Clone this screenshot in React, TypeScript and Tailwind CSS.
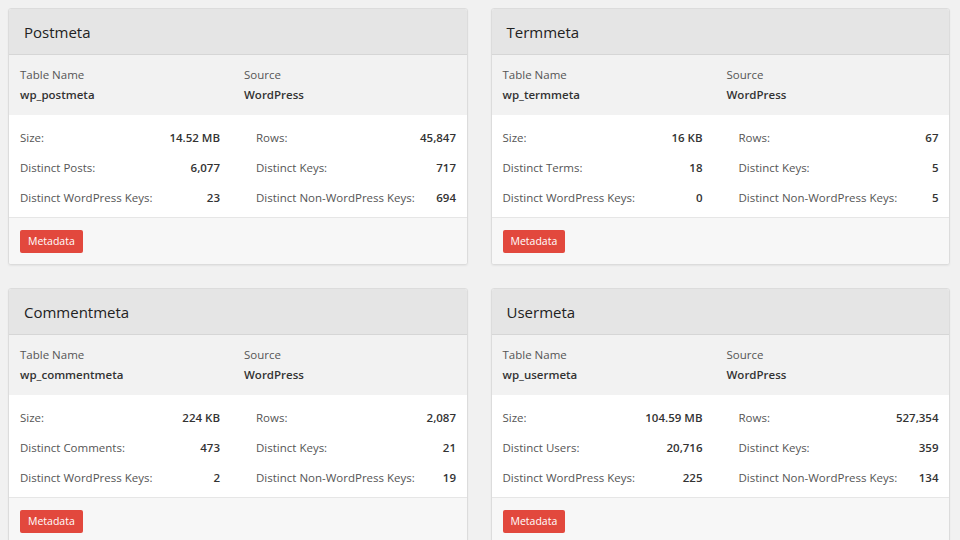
import * as React from 'react';

interface Stat {
  label: string,
  value: string
}

interface MetaCardProps {
  title: string,
  table: string,
  source: string,
  left: Stat[],
  right: Stat[]
}

const cards: MetaCardProps[] = [
  {
    title: "Postmeta", table: "wp_postmeta", source: "WordPress",
    left: [{ label: "Size:", value: "14.52 MB" }, { label: "Distinct Posts:", value: "6,077" }, { label: "Distinct WordPress Keys:", value: "23" }],
    right: [{ label: "Rows:", value: "45,847" }, { label: "Distinct Keys:", value: "717" }, { label: "Distinct Non-WordPress Keys:", value: "694" }],
  },
  {
    title: "Termmeta", table: "wp_termmeta", source: "WordPress",
    left: [{ label: "Size:", value: "16 KB" }, { label: "Distinct Terms:", value: "18" }, { label: "Distinct WordPress Keys:", value: "0" }],
    right: [{ label: "Rows:", value: "67" }, { label: "Distinct Keys:", value: "5" }, { label: "Distinct Non-WordPress Keys:", value: "5" }],
  },
  {
    title: "Commentmeta", table: "wp_commentmeta", source: "WordPress",
    left: [{ label: "Size:", value: "224 KB" }, { label: "Distinct Comments:", value: "473" }, { label: "Distinct WordPress Keys:", value: "2" }],
    right: [{ label: "Rows:", value: "2,087" }, { label: "Distinct Keys:", value: "21" }, { label: "Distinct Non-WordPress Keys:", value: "19" }],
  },
  {
    title: "Usermeta", table: "wp_usermeta", source: "WordPress",
    left: [{ label: "Size:", value: "104.59 MB" }, { label: "Distinct Users:", value: "20,716" }, { label: "Distinct WordPress Keys:", value: "225" }],
    right: [{ label: "Rows:", value: "527,354" }, { label: "Distinct Keys:", value: "359" }, { label: "Distinct Non-WordPress Keys:", value: "134" }],
  },
];

function StatColumn(props: { items: Stat[] }) {
  return (
    <div className="flex flex-col">
      {props.items.map((s) => (
        <div key={s.label} className="flex h-[30px] items-center justify-between">
          <span className="text-[#555]">{s.label}</span>
          <span className="font-semibold text-[#333]">{s.value}</span>
        </div>
      ))}
    </div>
  );
}

function MetaCard(props: MetaCardProps) {
  return (
    <div className="flex h-[257px] flex-col overflow-hidden rounded-[3px] border border-[#dcdcdc] bg-white shadow-[0_1px_2px_rgba(0,0,0,0.06)]">
      <div className="flex h-[46px] items-center border-b border-[#d6d6d6] bg-[#e5e5e5] px-[15px]">
        <h2 className="mt-[1px] text-[15px] text-[#222]">{props.title}</h2>
      </div>
      <div className="grid h-[60px] grid-cols-[224px_1fr] content-start bg-[#f2f2f2] px-[11px] pt-[10px] text-[11.5px] leading-[20px]">
        <div className="flex flex-col">
          <span className="text-[#555]">Table Name</span>
          <span className="font-semibold text-[#333]">{props.table}</span>
        </div>
        <div className="flex flex-col">
          <span className="text-[#555]">Source</span>
          <span className="font-semibold text-[#333]">{props.source}</span>
        </div>
      </div>
      <div className="grid h-[103px] grid-cols-[200px_200px] content-start gap-x-[36px] border-b border-[#e6e6e6] bg-white px-[11px] pt-[8px] text-[11.5px]">
        <StatColumn items={props.left} />
        <StatColumn items={props.right} />
      </div>
      <div className="flex flex-1 items-start bg-[#f7f7f7] px-[11px] pt-[12px]">
        <button className="h-[23px] rounded-[2px] bg-[#e2483d] px-[8px] text-[10.5px] text-white">Metadata</button>
      </div>
    </div>
  );
}

export default function App() {
  return (
    <div className="h-[540px] w-[960px] overflow-hidden bg-[#f1f1f1] pl-[8px] pr-[10px] pt-[8px]" style={{ fontFamily: '"Open Sans", "Noto Sans", sans-serif' }}>
      <div className="grid grid-cols-2 gap-x-[23px] gap-y-[23px]">
        {cards.map((c) => (
          <MetaCard key={c.title} {...c} />
        ))}
      </div>
    </div>
  );
}
